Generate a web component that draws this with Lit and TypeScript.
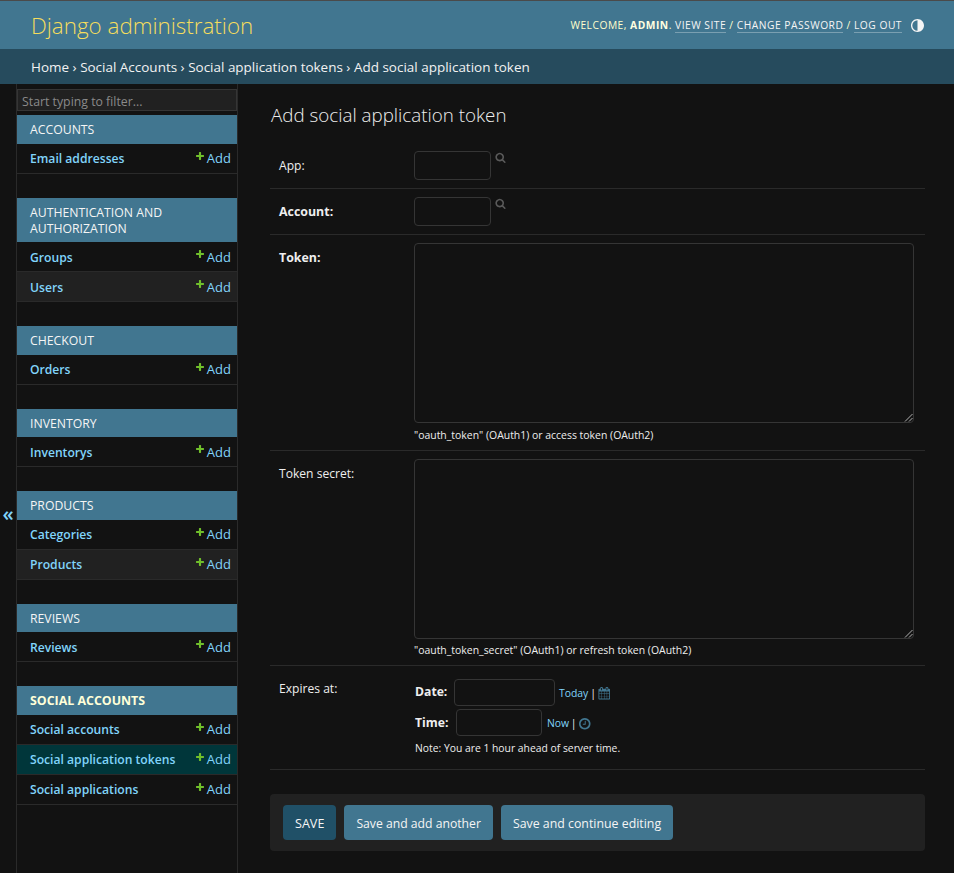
import { LitElement, html, css, svg } from "lit";
import { customElement } from "lit/decorators.js";

const plus = svg`<path d="M1600 796v192q0 40-28 68t-68 28h-416v416q0 40-28 68t-68 28h-192q-40 0-68-28t-28-68v-416h-416q-40 0-68-28t-28-68v-192q0-40 28-68t68-28h416v-416q0-40 28-68t68-28h192q40 0 68 28t28 68v416h416q40 0 68 28t28 68z"/>`;
const search = svg`<path d="M1216 832q0-185-131.5-316.5t-316.5-131.5-316.5 131.5-131.5 316.5 131.5 316.5 316.5 131.5 316.5-131.5 131.5-316.5zm512 832q0 52-38 90t-90 38q-54 0-90-38l-343-342q-179 124-399 124-143 0-273.5-55.5t-225-150-150-225-55.5-273.5 55.5-273.5 150-225 225-150 273.5-55.5 273.5 55.5 225 150 150 225 55.5 273.5q0 220-124 399l343 343q37 37 37 90z"/>`;
const calendar = svg`<path d="M192 1664h288v-288h-288v288zm352 0h320v-288h-320v288zm-352-352h288v-320h-288v320zm352 0h320v-320h-320v320zm-352-384h288v-288h-288v288zm736 736h320v-288h-320v288zm-384-736h320v-288h-320v288zm768 736h288v-288h-288v288zm-384-352h320v-320h-320v320zm-352-864v-288q0-13-9.5-22.5t-22.5-9.5h-64q-13 0-22.5 9.5t-9.5 22.5v288q0 13 9.5 22.5t22.5 9.5h64q13 0 22.5-9.5t9.5-22.5zm736 864h288v-320h-288v320zm-384-384h320v-288h-320v288zm384 0h288v-288h-288v288zm32-480v-288q0-13-9.5-22.5t-22.5-9.5h-64q-13 0-22.5 9.5t-9.5 22.5v288q0 13 9.5 22.5t22.5 9.5h64q13 0 22.5-9.5t9.5-22.5zm384-64v1280q0 52-38 90t-90 38h-1408q-52 0-90-38t-38-90v-1280q0-52 38-90t90-38h128v-96q0-66 47-113t113-47h64q66 0 113 47t47 113v96h384v-96q0-66 47-113t113-47h64q66 0 113 47t47 113v96h128q52 0 90 38t38 90z"/>`;
const clock = svg`<path d="M1024 544v448q0 14-9 23t-23 9h-320q-14 0-23-9t-9-23v-64q0-14 9-23t23-9h224v-352q0-14 9-23t23-9h64q14 0 23 9t9 23zm416 352q0-148-73-273t-198-198-273-73-273 73-198 198-73 273 73 273 198 198 273 73 273-73 198-198 73-273zm224 0q0 209-103 385.5t-279.5 279.5-385.5 103-385.5-103-279.5-279.5-103-385.5 103-385.5 279.5-279.5 385.5-103 385.5 103 279.5 279.5 103 385.5z"/>`;

const MODULES: { name: string; strong?: boolean; rows: { label: string; current?: boolean }[] }[] = [
  { name: "Accounts", rows: [{ label: "Email addresses" }] },
  { name: "Authentication and Authorization", rows: [{ label: "Groups" }, { label: "Users" }] },
  { name: "Checkout", rows: [{ label: "Orders" }] },
  { name: "Inventory", rows: [{ label: "Inventorys" }] },
  { name: "Products", rows: [{ label: "Categories" }, { label: "Products" }] },
  { name: "Reviews", rows: [{ label: "Reviews" }] },
  {
    name: "Social Accounts",
    strong: true,
    rows: [{ label: "Social accounts" }, { label: "Social application tokens", current: true }, { label: "Social applications" }],
  },
];

@customElement("app-root")
export class AppRoot extends LitElement {
  static styles = css`
    :host {
      display: block;
      min-height: 873px;
      background: #121212;
      color: #eeeeee;
      font-family: "Open Sans", "Noto Sans", sans-serif;
      font-size: 13px;
      --link: #81d4fa;
      --primary: #417690;
      --secondary: #264b5d;
      --border: #353535;
    }
    * { box-sizing: border-box; }
    a { color: var(--link); text-decoration: none; }
    svg { display: block; fill: currentColor; }

    .header {
      height: 49px;
      border-top: 1px solid #4a4a4a;
      background: var(--primary);
      display: flex;
      align-items: center;
      justify-content: space-between;
      padding: 0 30px 0 31px;
    }
    .brand { font-size: 22.4px; font-weight: 300; color: #f5dd5d; }
    .tools {
      display: flex;
      align-items: center;
      font-size: 10.25px;
      letter-spacing: 0.5px;
      color: #ffffcc;
      text-transform: uppercase;
      font-weight: 400;
      white-space: pre;
    }
    .tools b { font-weight: 700; color: #ffffe0; }
    .tools a { color: #f5f5f5; border-bottom: 1px solid rgba(255,255,255,.3); line-height: 14px; margin-top: 1px; }
    .toggle-theme { margin-left: 9px; width: 13px; height: 13px; color: #f5f5f5; }

    .crumbs {
      height: 35px;
      background: var(--secondary);
      display: flex;
      align-items: center;
      padding: 0 31px;
      color: #f2f2f2;
      font-size: 13.48px;
      white-space: pre;
    }
    .crumbs a { color: #f2f2f2; }

    .main { display: flex; align-items: stretch; min-height: 789px; }
    .collapse {
      width: 16px;
      flex: none;
      padding-top: 418px;
      text-align: center;
      color: var(--link);
      font-size: 20px;
      font-weight: 600;
      line-height: 24px;
    }
    .sidebar {
      width: 222px;
      flex: none;
      border-left: 1px solid #2a2a2a;
      border-right: 1px solid #2a2a2a;
      padding-top: 5.3px;
    }
    .filter {
      height: 22px;
      margin-bottom: 4px;
      background: #212121;
      border: 1px solid var(--border);
      padding: 1px 4px 0;
      color: #8a8a8a;
      font-size: 12.3px;
      line-height: 21px;
    }
    .module { margin-bottom: 24px; }
    .caption {
      background: var(--primary);
      color: #f5f5f5;
      padding: 7px 13px 5.5px;
      line-height: 16px;
      font-size: 12.25px;
      text-transform: uppercase;
    }
    .caption.strong { font-weight: 700; color: #ffffd8; font-size: 12.4px; }
    .row {
      height: 30px;
      border-bottom: 1px solid #2a2a2a;
      display: flex;
      align-items: center;
      justify-content: space-between;
      padding: 0 6px 0 13px;
      white-space: nowrap;
    }
    .row.alt { background: #212121; }
    .row.current { background: #00363a; }
    .row .name { font-weight: 600; font-size: 12.15px; margin-top: 0.6px; }
    .add { display: flex; align-items: center; font-size: 13px; }
    .add svg { width: 10px; height: 10px; color: #70bf2b; margin: -5px 2px 0 0; }

    .content { width: 655px; margin-left: 32px; flex: none; }
    h1 {
      margin: 0;
      height: 59px;
      padding: 18px 0 0 1px;
      font-size: 18.8px;
      font-weight: 300;
      line-height: 27px;
      color: #eeeeee;
    }
    .form-row {
      display: flex;
      padding: 8px 0 8px 9px;
      border-bottom: 1px solid #2a2a2a;
    }
    .form-row label {
      width: 135px;
      flex: none;
      padding-top: 7px;
      line-height: 16px;
      font-size: 12.1px;
    }
    .form-row label.req { font-weight: 700; font-size: 12.4px; }
    .input {
      display: block;
      height: 29px;
      width: 77px;
      background: #121212;
      border: 1px solid var(--border);
      border-radius: 4px;
    }
    .fk { display: flex; align-items: flex-start; }
    .fk svg { width: 11px; height: 11px; margin: 0.5px 0 0 4px; color: #5a5a5a; }
    .area { position: relative; height: 180px; width: 500px; }
    .area .input { width: 100%; height: 100%; }
    .grip { position: absolute; right: 1px; bottom: 1px; width: 9px; height: 9px; color: #b0b0b0; }
    .grip svg { fill: none; stroke: currentColor; stroke-width: 1; }
    .help { font-size: 10.45px; line-height: 13px; margin-top: 5.5px; color: #eeeeee; white-space: nowrap; }
    .dt { display: flex; align-items: center; white-space: pre; }
    .dt + .dt { margin-top: 3px; }
    .dt b { font-size: 12.2px; font-weight: 700; padding-left: 1px; margin-bottom: 2px; }
    .dt .input { height: 27px; flex: none; }
    .dt a { font-size: 10.4px; }
    .dt .sep { font-size: 10.5px; }
    .dt svg { margin-top: 2px; color: var(--primary); }
    .dt-body { padding: 5px 0 6px; }
    .date-l { width: 40px; }
    .dt b.time-l { width: 42px; margin-bottom: 1px; }
    .date-in { width: 101px; margin-right: 4px; }
    .time-in { width: 86px; margin-right: 5px; }
    .today-sep { margin: 0 1.5px 0 2px; }
    .now-sep { margin: 0 2px 0 1.5px; }
    .cal { width: 12.5px; height: 12.5px; }
    .clk { width: 13.5px; height: 13.5px; }
    .note { font-size: 10.35px; line-height: 14px; margin-top: 5px; padding-left: 1px; }

    .submit {
      margin-top: 24px;
      height: 57px;
      background: #212121;
      border-radius: 4px;
      padding: 11px 13px;
      display: flex;
      gap: 8px;
    }
    .btn {
      height: 35px;
      border-radius: 4px;
      background: var(--primary);
      color: #f5f5f5;
      font-size: 12.2px;
      display: flex;
      align-items: center;
      padding: 1px 12px 0;
      white-space: nowrap;
    }
    .btn.long { font-size: 12.35px; }
    .btn.default { background: #205067; font-size: 12.6px; }
  `;

  private module(m: (typeof MODULES)[number]) {
    return html`<div class="module">
      <div class="caption ${m.strong ? "strong" : ""}">${m.name}</div>
      ${m.rows.map(
        (r, i) => html`<div class="row ${i % 2 ? "alt" : ""} ${r.current ? "current" : ""}">
          <a class="name" href="#">${r.label}</a>
          <a class="add" href="#"><svg viewBox="0 0 1792 1792">${plus}</svg>Add</a>
        </div>`
      )}
    </div>`;
  }

  render() {
    return html`
      <div class="header">
        <div class="brand">Django administration</div>
        <div class="tools">Welcome, <b>admin</b>. <a href="#">View site</a> / <a href="#">Change password</a> / <a href="#">Log out</a>
          <svg class="toggle-theme" viewBox="2 2 20 20"><path fill-rule="evenodd" d="M12 22C6.477 22 2 17.523 2 12S6.477 2 12 2s10 4.477 10 10-4.477 10-10 10zm0-2V4a8 8 0 1 0 0 16z"/></svg>
        </div>
      </div>
      <div class="crumbs"><a href="#">Home</a> › <a href="#">Social Accounts</a> › <a href="#">Social application tokens</a> › Add social application token</div>
      <div class="main">
        <div class="collapse">«</div>
        <div class="sidebar">
          <div class="filter">Start typing to filter...</div>
          ${MODULES.map((m) => this.module(m))}
        </div>
        <div class="content">
          <h1>Add social application token</h1>
          <div class="form-row">
            <label>App:</label>
            <div class="fk"><span class="input"></span><svg viewBox="0 0 1792 1792">${search}</svg></div>
          </div>
          <div class="form-row">
            <label class="req">Account:</label>
            <div class="fk"><span class="input"></span><svg viewBox="0 0 1792 1792">${search}</svg></div>
          </div>
          <div class="form-row">
            <label class="req">Token:</label>
            <div>
              <div class="area"><span class="input"></span><span class="grip"><svg viewBox="0 0 9 9"><path d="M1 8.5 8.5 1M5 8.5 8.5 5"/></svg></span></div>
              <div class="help">"oauth_token" (OAuth1) or access token (OAuth2)</div>
            </div>
          </div>
          <div class="form-row">
            <label>Token secret:</label>
            <div>
              <div class="area"><span class="input"></span><span class="grip"><svg viewBox="0 0 9 9"><path d="M1 8.5 8.5 1M5 8.5 8.5 5"/></svg></span></div>
              <div class="help">"oauth_token_secret" (OAuth1) or refresh token (OAuth2)</div>
            </div>
          </div>
          <div class="form-row">
            <label>Expires at:</label>
            <div class="dt-body">
              <div class="dt"><b class="date-l">Date:</b><span class="input date-in"></span><a href="#">Today</a><span class="sep today-sep">|</span><svg class="cal" viewBox="0 0 1792 1792">${calendar}</svg></div>
              <div class="dt"><b class="time-l">Time:</b><span class="input time-in"></span><a href="#">Now</a><span class="sep now-sep">|</span><svg class="clk" viewBox="0 0 1792 1792">${clock}</svg></div>
              <div class="note">Note: You are 1 hour ahead of server time.</div>
            </div>
          </div>
          <div class="submit">
            <a class="btn default" href="#">SAVE</a>
            <a class="btn" href="#">Save and add another</a>
            <a class="btn long" href="#">Save and continue editing</a>
          </div>
        </div>
      </div>
    `;
  }
}
